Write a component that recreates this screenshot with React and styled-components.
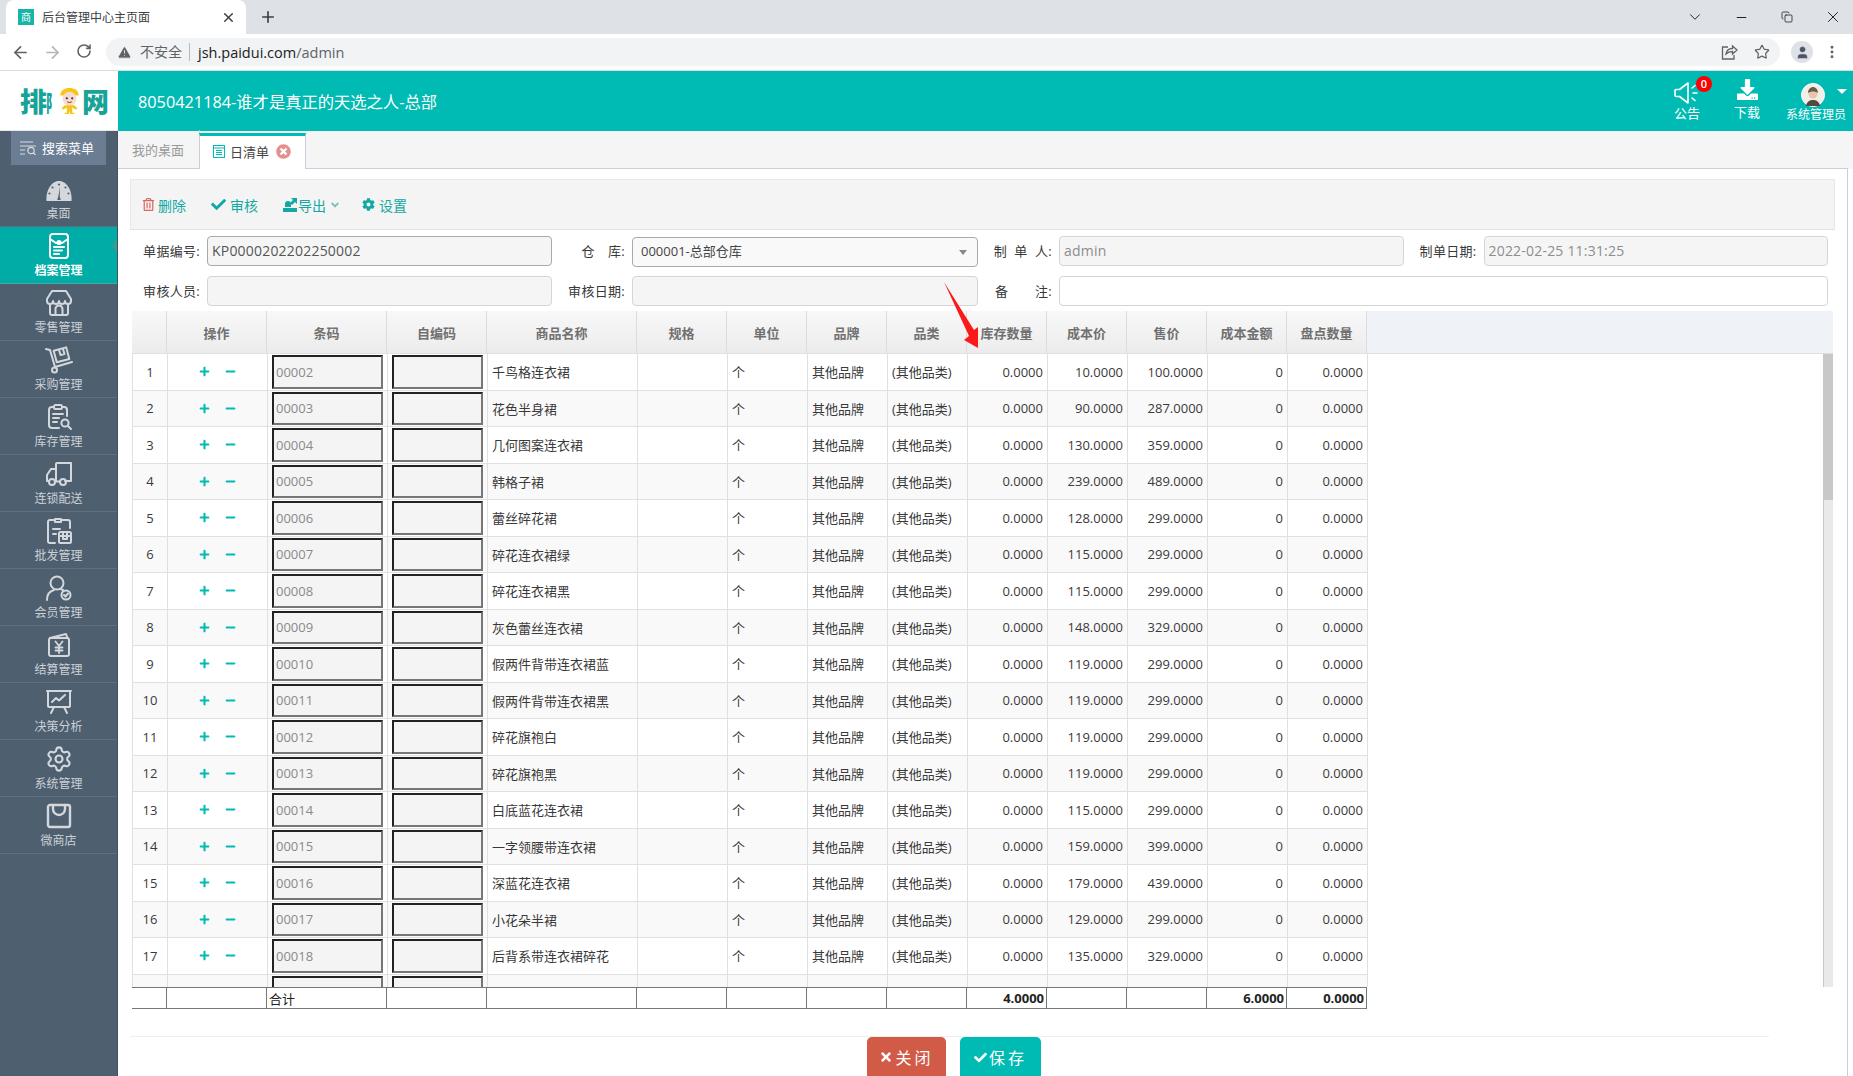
import React from 'react'
import styled, { createGlobalStyle } from 'styled-components'
import { FaCheck, FaCog, FaPlus, FaMinus, FaTimes, FaRegTrashAlt, FaAngleDown, FaDownload, FaTimesCircle } from 'react-icons/fa'
import { ArrowLeft, ArrowRight, RotateCw, Star, X, Plus, ChevronDown, Minus, EllipsisVertical, Copy, TriangleAlert, User, Settings } from 'lucide-react'

const TEAL = '#00bbb3'
const COLS = '35px 100px 120px 100px 150px 90px repeat(8, 80px)'
const SANS = '"Open Sans", "Noto Sans CJK SC", sans-serif'

const GlobalStyle = createGlobalStyle`
  html, body { margin: 0; padding: 0; height: 100%; overflow: hidden; background: #fff; }
  body { font-family: ${SANS}; font-size: 13px; color: #393939; }
  * { box-sizing: border-box; }
`

const Page = styled.div`
  width: 1853px;
  height: 1076px;
  display: flex;
  flex-direction: column;
  overflow: hidden;
`

/* browser chrome */
const TabStrip = styled.div`
  height: 34px;
  background: #dee1e6;
  display: flex;
  align-items: center;
  padding-left: 6px;
`
const BrowserTab = styled.div`
  width: 240px;
  height: 34px;
  background: #fff;
  border-radius: 8px 8px 0 0;
  display: flex;
  align-items: center;
  padding: 0 10px 0 12px;
  font-size: 12px;
  color: #3c4043;
`
const Favicon = styled.span`
  width: 16px;
  height: 16px;
  background: #16b5a8;
  color: #fff;
  font-size: 10px;
  line-height: 16px;
  text-align: center;
  margin-right: 8px;
  flex: none;
`
const TabTitle = styled.span`
  flex: 1;
`
const NewTab = styled.span`
  display: flex;
  margin-left: 13px;
  color: #3c4043;
`
const WindowControls = styled.div`
  margin-left: auto;
  margin-right: -3px;
  display: flex;
  align-items: center;
  color: #202124;
`
const WindowButton = styled.span`
  width: 46px;
  display: flex;
  justify-content: center;
`
const AddressBar = styled.div`
  height: 37px;
  background: #fff;
  display: flex;
  align-items: center;
  border-bottom: 1px solid #dadce0;
  color: #5f6368;
`
const NavButton = styled.span`
  width: 32px;
  display: flex;
  justify-content: center;
  color: ${p => (p.$off ? '#b4b7bb' : '#5f6368')};
`
const NavButtons = styled.div`
  display: flex;
  padding-left: 4px;
  width: 106px;
`
const Omnibox = styled.div`
  width: 1674px;
  height: 28px;
  border-radius: 14px;
  background: #f1f3f4;
  display: flex;
  align-items: center;
  padding: 0 10px 0 11px;
  font-size: 14px;
`
const Insecure = styled.span`
  margin-left: 8px;
  padding-right: 7px;
  border-right: 1px solid #b5b8bc;
  line-height: 18px;
  color: #5f6368;
`
const Url = styled.span`
  margin-left: 8px;
  font-size: 14.5px;
  color: #202124;
  span { color: #5f6368; }
`
const OmniIcons = styled.span`
  margin-left: auto;
  display: flex;
  gap: 16px;
  align-items: center;
  color: #5f6368;
`
const ProfileDot = styled.span`
  width: 22px;
  height: 22px;
  border-radius: 50%;
  background: #dee1e6;
  display: flex;
  align-items: center;
  justify-content: center;
  margin-left: 11px;
  color: #4d5566;
`
const MoreDots = styled.span`
  display: flex;
  margin-left: 11px;
  color: #5f6368;
`

/* app header */
const AppHeader = styled.header`
  height: 60px;
  background: ${TEAL};
  display: flex;
  align-items: center;
  color: #fff;
  flex: none;
`
const Logo = styled.div`
  width: 118px;
  height: 60px;
  background: #fff;
  display: flex;
  align-items: center;
  padding-left: 20px;
  color: #17a398;
  font-family: "Noto Sans CJK SC", sans-serif;
  font-weight: 900;
  font-size: 27px;
  letter-spacing: -1px;
  border-bottom: 1px solid #e8e8e8;
`
const LogoSide = styled.span`
  display: inline-block;
  width: 11px;
  font-size: 22px;
  transform: scaleX(.5);
  transform-origin: left center;
`
const Title = styled.h1`
  margin: 0 0 1px 20px;
  font-size: 16.3px;
  font-weight: 400;
`
const HeaderActions = styled.div`
  margin-left: auto;
  display: flex;
`
const HeaderAction = styled.div`
  position: relative;
  width: ${p => p.$w}px;
  height: 60px;
  display: flex;
  flex-direction: column;
  align-items: center;
  justify-content: flex-end;
  padding-bottom: ${p => p.$pb}px;
  font-size: ${p => p.$fs}px;
  line-height: 16px;
  svg { flex: none; margin-right: ${p => p.$shift || 0}px; }
`
const Badge = styled.span`
  position: absolute;
  top: 5px;
  left: 37px;
  width: 16px;
  height: 16px;
  border-radius: 50%;
  background: #f00;
  font-size: 11px;
  line-height: 16px;
  text-align: center;
  font-weight: 600;
`
const UserCaret = styled.span`
  position: absolute;
  top: 18px;
  right: 6px;
  border: 5px solid transparent;
  border-top: 5px solid #fff;
  border-bottom: 0;
  width: 0;
  height: 0;
`

/* sidebar */
const Body = styled.div`
  flex: 1;
  display: flex;
  min-height: 0;
`
const Sidebar = styled.aside`
  width: 118px;
  background: #4e5f70;
  flex: none;
  border-right: 1px solid #44525f;
`
const SearchMenu = styled.div`
  width: 95px;
  height: 34px;
  margin: 0 0 5px 11px;
  background: #6a7d92;
  color: #fff;
  display: flex;
  align-items: center;
  padding: 0 0 1px 9px;
  gap: 5px;
  font-size: 13px;
`
const NavItem = styled.div`
  position: relative;
  height: 57px;
  display: flex;
  flex-direction: column;
  align-items: center;
  justify-content: flex-end;
  padding-bottom: 4px;
  font-size: 12px;
  line-height: 16px;
  border-bottom: 1px solid ${p => (p.$active ? '#46a9a6' : '#5d6f81')};
  background: ${p => (p.$active ? '#00ada6' : 'transparent')};
  color: ${p => (p.$active ? '#fff' : '#ccd1d6')};
  font-weight: ${p => (p.$active ? 600 : 400)};
  svg { margin-bottom: 3px; color: ${p => (p.$active ? '#fff' : '#d4d8dc')}; }
`
const ActiveNotch = styled.span`
  position: absolute;
  right: 0;
  top: 12px;
  width: 0;
  height: 0;
  border: 7px solid transparent;
  border-right: 6px solid #2f9f9c;
  border-left: 0;
`

/* main area */
const Main = styled.main`
  flex: 1;
  min-width: 0;
  display: flex;
  flex-direction: column;
  padding-right: 5px;
  background: linear-gradient(#f5f5f5, #f5f5f5) right top / 5px 38px no-repeat;
`
const TabBar = styled.div`
  height: 38px;
  background: #f5f5f5;
  border-bottom: 1px solid #c5d0dc;
  display: flex;
  align-items: flex-end;
  flex: none;
`
const PageTab = styled.div`
  height: ${p => (p.$active ? 36 : 38)}px;
  width: ${p => (p.$active ? 107 : 82)}px;
  display: flex;
  align-items: center;
  font-size: 13px;
  border-right: 1px solid #c5d0dc;
  ${p => (p.$active
    ? `background: #fff; border-top: 3px solid ${TEAL}; border-left: 1px solid #c5d0dc; margin: 0 0 -1px -1px; padding: 0 0 2px 13px; gap: 5px; color: #444;`
    : 'padding-left: 14px; color: #999;')}
`
const TabClose = styled.span`
  display: flex;
  margin-left: 2px;
  color: #e58f8f;
`
const Panel = styled.div`
  flex: 1;
  min-height: 0;
  background: #fff;
  border-right: 1px solid #c5d0dc;
  display: flex;
  flex-direction: column;
`
const Toolbar = styled.div`
  height: 51px;
  margin: 10px 12px 0;
  background: #f4f4f4;
  border: 1px solid #e8e8e8;
  border-bottom: 1px solid #e2e2e2;
  display: flex;
  align-items: center;
  gap: 25px;
  padding-left: 11px;
  flex: none;
`
const ToolItem = styled.span`
  display: flex;
  align-items: center;
  gap: ${p => p.$gap ?? 4}px;
  font-size: 14px;
  color: #12a8a3;
`
const FormGrid = styled.div`
  display: grid;
  grid-template-columns: 75px 345px 80px 345.5px 81.5px 344.5px 80px 344.5px;
  grid-auto-rows: 30px;
  row-gap: 10px;
  margin: 6px 0 0 14px;
  width: 1696px;
  flex: none;
`
const FieldLabel = styled.label`
  display: flex;
  align-items: center;
  justify-content: flex-end;
  padding: 0 7px 2px 0;
  font-size: 13px;
  letter-spacing: .3px;
  white-space: pre;
  color: #393939;
`
const FieldInput = styled.input`
  width: 100%;
  height: 30px;
  border-radius: 4px;
  padding: 0 4px 2px;
  font: 14px ${SANS};
  letter-spacing: .2px;
  outline: none;
  color: ${p => (p.$strong ? '#555' : '#8d8d8d')};
  background: ${p => (p.$blank ? '#fff' : '#f5f5f5')};
  border: 1px solid ${p => (p.$strong ? '#a9a9a9' : '#d5d5d5')};
  grid-column: ${p => p.$span || 'auto'};
`
const SelectBox = styled.div`
  height: 30px;
  margin-top: 1px;
  border-radius: 4px;
  border: 1px solid #a9a9a9;
  background: #f9f9f9;
  display: flex;
  align-items: center;
  justify-content: space-between;
  padding: 0 10px 3px 8px;
  font-size: 13px;
  color: #444;
`
const SelectCaret = styled.span`
  width: 0;
  height: 0;
  margin-top: 3px;
  border: 4px solid transparent;
  border-top: 5px solid #888;
  border-bottom: 0;
`

/* grid table */
const TableSection = styled.section`
  position: relative;
  width: 1701px;
  margin: 5px 0 0 14px;
  flex: none;
`
const HeadRow = styled.div`
  height: 43px;
  background: #eff2f6;
  border-bottom: 1px solid #dfdfdf;
  display: grid;
  grid-template-columns: ${COLS};
`
const HeadCell = styled.div`
  display: flex;
  align-items: center;
  justify-content: center;
  background: linear-gradient(#f8f8f8, #ececec);
  border-right: 1px solid #dcdcdc;
  font-size: 13px;
  font-weight: 700;
  color: #707070;
`
const RowsViewport = styled.div`
  height: 633px;
  overflow: hidden;
  border-left: 1px solid #e0e0e0;
`
const Row = styled.div`
  height: 36.5px;
  width: 1235px;
  display: grid;
  grid-template-columns: ${COLS};
  background: ${p => (p.$even ? '#f9f9f9' : '#fff')};
  border-bottom: 1px solid #e0e0e0;
`
const Cell = styled.div`
  display: flex;
  align-items: center;
  justify-content: ${p => p.$align || 'flex-start'};
  padding: 0 4px;
  border-right: 1px solid #e0e0e0;
  font-size: 13px;
  color: #393939;
  min-width: 0;
  white-space: nowrap;
`
const OpCell = styled(Cell)`
  justify-content: center;
  gap: 15px;
  color: ${TEAL};
`
const CodeInput = styled.input`
  width: 100%;
  height: 33.5px;
  padding: 0 2px;
  font: 13px ${SANS};
  color: #8a8a8a;
  background: #f4f4f4;
  outline: none;
  border-width: 2px;
  border-style: solid;
  border-color: #222 #767676 #767676 #222;
`
const ScrollTrack = styled.div`
  position: absolute;
  right: 0;
  top: 43px;
  width: 10px;
  height: 633px;
  background: #e9e9e9;
  border-left: 1px solid #c8c8c8;
`
const ScrollThumb = styled.div`
  height: 146px;
  background: #c8c8c8;
`
const TotalRow = styled.div`
  width: 1235px;
  height: 22px;
  display: grid;
  grid-template-columns: ${COLS};
  border-top: 1px solid #777;
  border-bottom: 1px solid #777;
`
const TotalCell = styled.div`
  border-right: 1px solid #777;
  display: flex;
  align-items: center;
  justify-content: ${p => (p.$bold ? 'flex-end' : 'flex-start')};
  padding: 0 2px;
  font-size: 13px;
  font-weight: ${p => (p.$bold ? 700 : 400)};
  color: #222;
`
const ArrowMark = styled.svg`
  position: absolute;
  left: 812px;
  top: -29px;
  pointer-events: none;
`
const ActionBar = styled.div`
  width: 1639px;
  margin: 27px 0 0 12px;
  border-top: 1px solid #eee;
  display: flex;
  justify-content: center;
  gap: 14px;
  padding-left: 9px;
  flex: none;
`
const ActionButton = styled.button`
  width: ${p => p.$w}px;
  height: 40px;
  border: 0;
  border-radius: 5px 5px 0 0;
  background: ${p => p.$bg};
  color: #fff;
  font: 16px ${SANS};
  letter-spacing: 3px;
  display: flex;
  align-items: center;
  justify-content: center;
  gap: 2px;
`

const Stroke = ({ children, size = 28, vb = 28 }) => (
  <svg width={size} height={size} viewBox={`0 0 ${vb} ${vb}`} fill="none" stroke="currentColor" strokeWidth="2" strokeLinecap="round" strokeLinejoin="round">
    {children}
  </svg>
)

const icons = {
  desk: (
    <svg width="28" height="24" viewBox="0 0 28 24">
      <path d="M1.5 22C.6 12 6 2 14 2s13.4 10 12.5 20z" fill="currentColor" />
      <g fill="#4e5f70">
        <circle cx="14" cy="5.5" r="1.1" /><circle cx="7.5" cy="8.5" r="1.1" /><circle cx="20.5" cy="8.5" r="1.1" />
        <circle cx="4.5" cy="14.5" r="1.1" /><circle cx="23.5" cy="14.5" r="1.1" />
        <path d="M15 7.5l-.3 10 1 3.5h-3.400l1-3.500z" />
      </g>
    </svg>
  ),
  archive: (
    <Stroke>
      <rect x="5" y="2" width="18" height="24" rx="3" />
      <path d="M5 7l6 4h6l6-4" />
      <circle cx="14" cy="10.5" r="1.6" />
      <path d="M9 15h10M9 18.5h8M9 22h5" />
    </Stroke>
  ),
  store: (
    <Stroke>
      <path d="M7 2h14l5 8v2a3 3 0 0 1-6 0 3 3 0 0 1-6 0 3 3 0 0 1-6 0 3 3 0 0 1-6 0v-2z" />
      <path d="M5 15v9a2 2 0 0 0 2 2h14a2 2 0 0 0 2-2v-9" />
      <path d="M10.5 26v-6a3.5 3.5 0 0 1 7 0v6" />
    </Stroke>
  ),
  cart: (
    <Stroke>
      <path d="M1 3l4 1 5 17 17-5" />
      <rect x="10" y="3" width="13" height="12" transform="rotate(-15 16 9)" />
      <path d="M14 4l1.5 5 4-1-1.5-5" />
      <circle cx="9.5" cy="24" r="2.5" />
    </Stroke>
  ),
  stock: (
    <Stroke>
      <path d="M14 25H7a3 3 0 0 1-3-3V7a3 3 0 0 1 3-3h1m10 0h1a3 3 0 0 1 3 3v6" />
      <rect x="9" y="2" width="8" height="4" rx="1.5" />
      <path d="M8 11h10M8 15h6M8 19h4" />
      <circle cx="20" cy="20" r="3.6" />
      <path d="M23 23l3 3" />
    </Stroke>
  ),
  truck: (
    <Stroke>
      <path d="M11 21V4a1 1 0 0 1 1-1h14v18H20" />
      <path d="M11 9H6l-4 6v6h2" />
      <circle cx="7" cy="22" r="3" /><circle cx="18" cy="22" r="3" />
      <path d="M10 21.500h5" />
    </Stroke>
  ),
  wholesale: (
    <Stroke>
      <path d="M10 26H5a2 2 0 0 1-2-2V5a2 2 0 0 1 2-2h4m8 0h6a2 2 0 0 1 2 2v6" />
      <path d="M10 2h6v3h-6zM8 12h7M8 17h3" />
      <rect x="14" y="15" width="12" height="11" rx="1.500" />
      <path d="M14 19h12M18 15v7h4v-7" />
    </Stroke>
  ),
  member: (
    <Stroke>
      <circle cx="12" cy="9" r="6.500" />
      <path d="M2 26c0-6 3-9 7-10M18 16c-1-.5-2-1-3-1" />
      <circle cx="21" cy="21" r="4.500" />
      <path d="M19 21l1.500 1.500 2.500-3" />
    </Stroke>
  ),
  settle: (
    <Stroke>
      <path d="M5 7l16-4 1.500 4" />
      <rect x="4" y="7" width="20" height="18" rx="2" />
      <path d="M10.500 10.500l3.500 4.500 3.500-4.500M14 15v7M10.500 16.500h7M10.500 19.500h7" strokeWidth="1.800" />
    </Stroke>
  ),
  chart: (
    <Stroke>
      <rect x="3" y="3" width="22" height="16" rx="1" />
      <path d="M7 14l4-4 3 2.500L20 7" />
      <path d="M9 19l-3 6M19 19l3 6M2 3h24" />
    </Stroke>
  ),
  bag: (
    <Stroke>
      <path d="M5 3h18a2 2 0 0 1 2 2v18a2 2 0 0 1-2 2H5a2 2 0 0 1-2-2V5a2 2 0 0 1 2-2z" strokeWidth="2.400" />
      <path d="M8 3v4a6 6 0 0 0 12 0V3" strokeWidth="2.400" />
    </Stroke>
  ),
}

const navItems = [
  { label: '桌面', icon: icons.desk },
  { label: '档案管理', icon: icons.archive, active: true },
  { label: '零售管理', icon: icons.store },
  { label: '采购管理', icon: icons.cart },
  { label: '库存管理', icon: icons.stock },
  { label: '连锁配送', icon: icons.truck },
  { label: '批发管理', icon: icons.wholesale },
  { label: '会员管理', icon: icons.member },
  { label: '结算管理', icon: icons.settle },
  { label: '决策分析', icon: icons.chart },
  { label: '系统管理', icon: <Settings size={28} strokeWidth={1.8} /> },
  { label: '微商店', icon: icons.bag },
]

const headers = ['', '操作', '条码', '自编码', '商品名称', '规格', '单位', '品牌', '品类', '库存数量', '成本价', '售价', '成本金额', '盘点数量']

const products = [
  ['千鸟格连衣裙', 10, 100], ['花色半身裙', 90, 287], ['几何图案连衣裙', 130, 359], ['韩格子裙', 239, 489],
  ['蕾丝碎花裙', 128, 299], ['碎花连衣裙绿', 115, 299], ['碎花连衣裙黑', 115, 299], ['灰色蕾丝连衣裙', 148, 329],
  ['假两件背带连衣裙蓝', 119, 299], ['假两件背带连衣裙黑', 119, 299], ['碎花旗袍白', 119, 299], ['碎花旗袍黑', 119, 299],
  ['白底蓝花连衣裙', 115, 299], ['一字领腰带连衣裙', 159, 399], ['深蓝花连衣裙', 179, 439], ['小花朵半裙', 129, 299],
  ['后背系带连衣裙碎花', 135, 329],
]

const Mascot = () => (
  <svg width="25" height="28" viewBox="0 0 23 26">
    <path d="M3 8c0-5 4-7 8.500-7S20 3 20 8z" fill="#f7c518" />
    <circle cx="11.500" cy="11" r="6.500" fill="#f6dcd0" />
    <circle cx="9" cy="10.500" r="1" fill="#333" /><circle cx="14" cy="10.500" r="1" fill="#333" />
    <path d="M9.500 13.500c1 1.200 3 1.200 4 0" stroke="#c0392b" fill="none" />
    <path d="M7 17l-3 3 2 1 3-2v5H7v1h4l.5-3 .5 3h4v-1h-2v-5l3 2 2-1-3-3z" fill="#f7c518" />
  </svg>
)

const Avatar = () => (
  <svg width="24" height="24" viewBox="0 0 24 24">
    <circle cx="12" cy="12" r="11.500" fill="#f2efe9" stroke="#fff" />
    <path d="M5 23c1-5 4-6 7-6s6 1 7 6z" fill="#55493f" />
    <circle cx="12" cy="11" r="4.500" fill="#e6c6ac" />
    <path d="M7 10c0-4 3-6 5-6s5 2 5 6c-3-2-7-2-10 0z" fill="#6d5a4b" />
  </svg>
)

const Speaker = () => (
  <svg width="26" height="24" viewBox="0 0 26 24" fill="none" stroke="#fff" strokeWidth="1.600" strokeLinejoin="round" strokeLinecap="round">
    <path d="M2 8.500h3.500L14 2v20l-8.500-6.500H2a1 1 0 0 1-1-1v-5a1 1 0 0 1 1-1z" />
    <path d="M18 7l3-2.500M19 12h4M18 17l3 2.500" />
  </svg>
)

const ExportIcon = () => (
  <svg width="14" height="14" viewBox="0 0 14 14" fill="currentColor">
    <path d="M0 10h14v4H0zM5 3a3 3 0 0 1 3 3v3H2V6a3 3 0 0 1 3-3z" />
    <path d="M7 5l3-3-2-2h6v6l-2-2-3 3z" />
  </svg>
)

const ListIcon = () => (
  <svg width="12" height="13" viewBox="0 0 12 13" fill="none" stroke={TEAL}>
    <rect x=".5" y=".5" width="11" height="12" />
    <path d="M.5 3h11M3 5.500h6M3 7.500h6M3 9.500h6" />
  </svg>
)

const Money = v => v.toFixed(4)

export default function App() {
  return (
    <Page>
      <GlobalStyle />
      <TabStrip>
        <BrowserTab>
          <Favicon>商</Favicon>
          <TabTitle>后台管理中心主页面</TabTitle>
          <X size={15} strokeWidth={2.4} />
        </BrowserTab>
        <NewTab><Plus size={18} strokeWidth={2.2} /></NewTab>
        <WindowControls>
          <WindowButton><ChevronDown size={18} strokeWidth={1.3} /></WindowButton>
          <WindowButton><Minus size={15} strokeWidth={1.6} /></WindowButton>
          <WindowButton><Copy size={12} strokeWidth={1.6} /></WindowButton>
          <WindowButton><X size={18} strokeWidth={1.3} /></WindowButton>
        </WindowControls>
      </TabStrip>
      <AddressBar>
        <NavButtons>
          <NavButton><ArrowLeft size={19} strokeWidth={2.2} /></NavButton>
          <NavButton $off><ArrowRight size={19} strokeWidth={2.2} /></NavButton>
          <NavButton><RotateCw size={16} strokeWidth={2.4} /></NavButton>
        </NavButtons>
        <Omnibox>
          <TriangleAlert size={15} fill="#5f6368" stroke="#f1f3f4" strokeWidth={1.4} />
          <Insecure>不安全</Insecure>
          <Url>jsh.paidui.com<span>/admin</span></Url>
          <OmniIcons>
            <svg width="17" height="16" viewBox="0 0 17 16" fill="none" stroke="#5f6368" strokeWidth="1.300">
              <path d="M7 3H1.500v12H13v-4" />
              <path d="M5 10c.5-3.500 3-5.500 6.500-5.500V2l4.500 4-4.500 4V7.500C8.500 7.500 6.500 8.500 5 10z" />
            </svg>
            <Star size={16} strokeWidth={1.8} />
          </OmniIcons>
        </Omnibox>
        <ProfileDot><User size={15} fill="currentColor" strokeWidth={1} /></ProfileDot>
        <MoreDots><EllipsisVertical size={16} strokeWidth={2.4} /></MoreDots>
      </AddressBar>

      <AppHeader>
        <Logo>
          排<LogoSide>阝</LogoSide><Mascot />网
        </Logo>
        <Title>8050421184-谁才是真正的天选之人-总部</Title>
        <HeaderActions>
          <HeaderAction $w={56} $pb={10} $fs={13}>
            <Speaker />
            公告
            <Badge>0</Badge>
          </HeaderAction>
          <HeaderAction $w={64} $pb={11} $fs={13}>
            <FaDownload size={21} style={{ marginBottom: 4 }} />
            下载
          </HeaderAction>
          <HeaderAction $w={74} $pb={8} $fs={12} $shift={6}>
            <Avatar />
            系统管理员
            <UserCaret />
          </HeaderAction>
        </HeaderActions>
      </AppHeader>

      <Body>
        <Sidebar>
          <SearchMenu>
            <svg width="17" height="14" viewBox="0 0 17 14" fill="none" stroke="#d7dde3" strokeWidth="1.200">
              <path d="M0 1h13M0 5h16M0 9h5M0 13h5" />
              <circle cx="11" cy="9.500" r="3.200" />
              <path d="M13.500 12l2 2" />
            </svg>
            搜索菜单
          </SearchMenu>
          {navItems.map(item => (
            <NavItem key={item.label} $active={item.active}>
              {item.icon}
              {item.label}
              {item.active && <ActiveNotch />}
            </NavItem>
          ))}
        </Sidebar>

        <Main>
          <TabBar>
            <PageTab>我的桌面</PageTab>
            <PageTab $active>
              <ListIcon />
              日清单
              <TabClose><FaTimesCircle size={15} /></TabClose>
            </PageTab>
          </TabBar>
          <Panel>
            <Toolbar>
              <ToolItem $gap={3}><FaRegTrashAlt size={13} color="#d9695d" />删除</ToolItem>
              <ToolItem><FaCheck size={15} />审核</ToolItem>
              <ToolItem $gap={1}>
                <ExportIcon />导出<FaAngleDown size={12} color="#7fb9b8" style={{ margin: '0 -4px 0 2px' }} />
              </ToolItem>
              <ToolItem><FaCog size={13} />设置</ToolItem>
            </Toolbar>

            <FormGrid>
              <FieldLabel>单据编号:</FieldLabel>
              <FieldInput $strong readOnly value="KP0000202202250002" />
              <FieldLabel>{'仓\u3000库:'}</FieldLabel>
              <SelectBox>000001-总部仓库<SelectCaret /></SelectBox>
              <FieldLabel>{'制\u00a0\u00a0单\u00a0\u00a0人:'}</FieldLabel>
              <FieldInput readOnly value="admin" />
              <FieldLabel>制单日期:</FieldLabel>
              <FieldInput readOnly value="2022-02-25 11:31:25" />
              <FieldLabel>审核人员:</FieldLabel>
              <FieldInput readOnly />
              <FieldLabel>审核日期:</FieldLabel>
              <FieldInput readOnly />
              <FieldLabel>{'备\u3000\u3000注:'}</FieldLabel>
              <FieldInput $blank $span="span 3" />
            </FormGrid>

            <TableSection>
              <HeadRow>
                {headers.map((h, i) => <HeadCell key={i}>{h}</HeadCell>)}
              </HeadRow>
              <RowsViewport>
                {products.map(([name, cost, price], i) => (
                  <Row key={i} $even={i % 2 === 1}>
                    <Cell $align="center">{i + 1}</Cell>
                    <OpCell><FaPlus size={11} /><FaMinus size={11} /></OpCell>
                    <Cell><CodeInput readOnly value={`000${String(i + 2).padStart(2, '0')}`} /></Cell>
                    <Cell><CodeInput readOnly /></Cell>
                    <Cell>{name}</Cell>
                    <Cell />
                    <Cell>个</Cell>
                    <Cell>其他品牌</Cell>
                    <Cell>(其他品类)</Cell>
                    <Cell $align="flex-end">0.0000</Cell>
                    <Cell $align="flex-end">{Money(cost)}</Cell>
                    <Cell $align="flex-end">{Money(price)}</Cell>
                    <Cell $align="flex-end">0</Cell>
                    <Cell $align="flex-end">0.0000</Cell>
                  </Row>
                ))}
                <Row $even>
                  <Cell /><Cell />
                  <Cell><CodeInput readOnly /></Cell>
                  <Cell><CodeInput readOnly /></Cell>
                  {headers.slice(4).map((h, i) => <Cell key={i} />)}
                </Row>
              </RowsViewport>
              <TotalRow>
                {headers.map((h, i) => (
                  <TotalCell key={i} $bold={i === 9 || i >= 12}>
                    {i === 2 && '合计'}
                    {i === 9 && '4.0000'}
                    {i === 12 && '6.0000'}
                    {i === 13 && '0.0000'}
                  </TotalCell>
                ))}
              </TotalRow>
              <ScrollTrack><ScrollThumb /></ScrollTrack>
              <ArrowMark width="36" height="68" viewBox="0 0 36 68">
                <path d="M0 0L30 48l4-3v21l-14-8 5-4z" fill="#fb1a1a" />
              </ArrowMark>
            </TableSection>

            <ActionBar>
              <ActionButton $w={79} $bg="#d15b47"><FaTimes size={14} />关闭</ActionButton>
              <ActionButton $w={81} $bg={TEAL}><FaCheck size={13} />保存</ActionButton>
            </ActionBar>
          </Panel>
        </Main>
      </Body>
    </Page>
  )
}
